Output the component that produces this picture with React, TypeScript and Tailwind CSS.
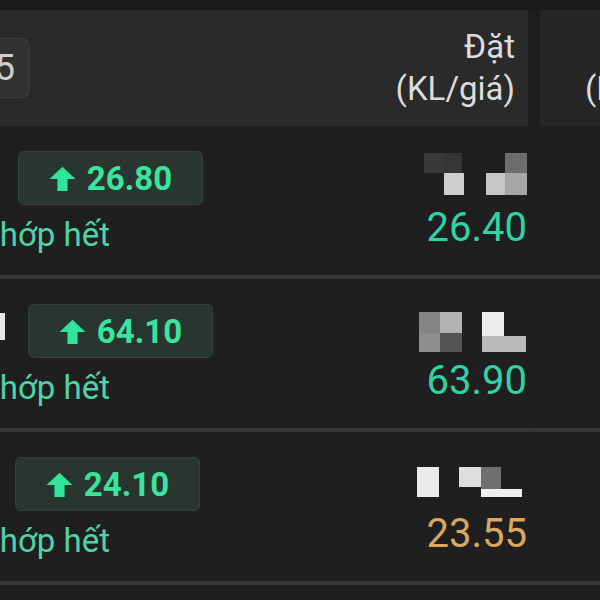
import React from 'react';

type Cell = [number, number, number, number, string];

interface OrderRow {
  lead?: boolean;
  badgeOffset: string;
  high: string;
  matched: string;
  matchedColor: string;
  cells: Cell[];
}

const rows: OrderRow[] = [
  {
    badgeOffset: 'ml-[18px]',
    high: '26.80',
    matched: '26.40',
    matchedColor: 'text-[#2fd3a6]',
    cells: [
      [7, 2, 19, 20, '#3a3a3a'],
      [26, 2, 19, 20, '#363636'],
      [27, 22, 20, 22, '#cfcfcf'],
      [69, 22, 19, 22, '#c6c6c6'],
      [88, 22, 22, 22, '#a6a6a6'],
      [88, 2, 22, 20, '#6e6e6e'],
    ],
  },
  {
    lead: true,
    badgeOffset: 'ml-[23px]',
    high: '64.10',
    matched: '63.90',
    matchedColor: 'text-[#2fd3a6]',
    cells: [
      [2, 8, 21, 21, '#858585'],
      [23, 8, 22, 21, '#b2b2b2'],
      [2, 29, 21, 19, '#8e8e8e'],
      [23, 29, 22, 19, '#555555'],
      [65, 8, 22, 24, '#ececec'],
      [65, 32, 44, 16, '#b9b9b9'],
    ],
  },
  {
    badgeOffset: 'ml-[15px]',
    high: '24.10',
    matched: '23.55',
    matchedColor: 'text-[#d9a75e]',
    cells: [
      [0, 10, 22, 30, '#ebebeb'],
      [42, 10, 22, 20, '#dedede'],
      [64, 10, 20, 22, '#6f6f6f'],
      [64, 32, 41, 8, '#efefef'],
    ],
  },
];

const UpArrow = () => (
  <svg width="27" height="27" viewBox="0 0 24 24" className="shrink-0">
    <path d="M12 1.5 L23.5 12.5 H16.5 V23 H7.5 V12.5 H0.5 Z" fill="#2fe59b" />
  </svg>
);

// pixelated volume, blurred out in the source
const Mosaic = ({ cells }: { cells: Cell[] }) => (
  <svg width="110" height="50" viewBox="0 0 110 50">
    {cells.map(([x, y, w, h, c], i) => (
      <rect key={i} x={x} y={y} width={w} height={h} fill={c} />
    ))}
  </svg>
);

const Row = ({ row }: { row: OrderRow }) => (
  <div className="flex h-[149px] bg-[#1f1f1f]">
    <div className="flex w-[528px] pt-[25px]">
      <div className="flex flex-col">
        <div className="flex items-start">
          {row.lead && <span className="mt-[9px] h-[27px] w-[5px] bg-[#e8e8e8]" />}
          <div
            className={`${row.badgeOffset} flex h-[54px] w-[185px] items-center justify-center gap-[11px] rounded-md border border-[#33423b] bg-[#28362f]`}
          >
            <UpArrow />
            <span className="text-[33px] leading-none font-bold text-[#3be3a0]">{row.high}</span>
          </div>
        </div>
        <div className="mt-[11px] ml-[-21px] text-[33px] leading-[38px] whitespace-nowrap text-[#4fd3a8]">
          Khớp hết
        </div>
      </div>
      <div className="ml-auto flex flex-col items-end pr-[1px]">
        <Mosaic cells={row.cells} />
        <div className={`mt-[7px] text-[40px] leading-[40px] ${row.matchedColor}`}>{row.matched}</div>
      </div>
    </div>
    <div className="flex-1 border-l border-[#222222] bg-[#1f1f1f]" />
  </div>
);

export default function App() {
  return (
    <div className="h-[600px] w-[600px] overflow-hidden bg-[#1f1f1f] font-['Roboto',sans-serif]">
      <div className="h-[10px] bg-[#1b1b1b]" />
      <div className="flex h-[116px]">
        <div className="flex w-[528px] items-center justify-between bg-[#2a2a2a] pr-[13px]">
          <div className="ml-[-32px] flex h-[60px] w-[62px] items-center justify-end rounded-lg border border-[#3d3d3d] bg-[#323232] pr-[14px] text-[36px] text-[#cfcfcf]">
            5
          </div>
          <div className="text-right text-[33px] leading-[42px] text-[#dcdcdc]">
            <div>Đặt</div>
            <div>(KL/giá)</div>
          </div>
        </div>
        <div className="w-[12px] bg-[#1e1e1e]" />
        <div className="flex flex-1 items-center overflow-hidden bg-[#262626] pl-[45px]">
          <div className="text-center text-[33px] leading-[42px] whitespace-nowrap text-[#dcdcdc]">
            <div>Bán</div>
            <div>(KL/giá)</div>
          </div>
        </div>
      </div>
      {rows.map((row, i) => (
        <React.Fragment key={i}>
          <Row row={row} />
          <div className="h-[4px] bg-[#363636]" />
        </React.Fragment>
      ))}
    </div>
  );
}
